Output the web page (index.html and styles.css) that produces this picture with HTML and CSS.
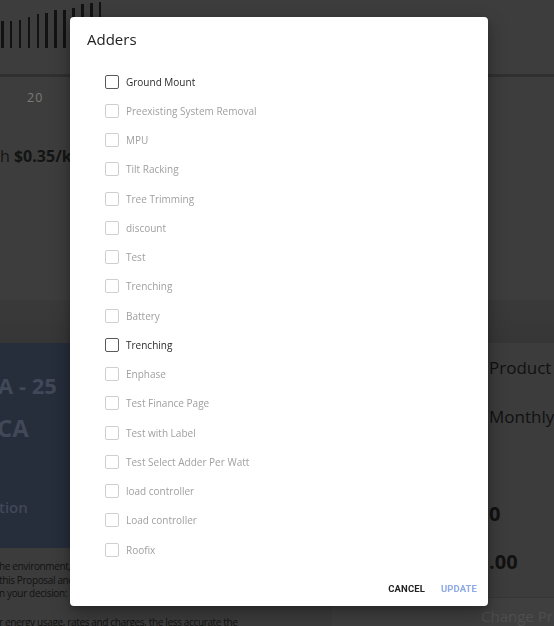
FILE: index.html
```html
<!DOCTYPE html>
<html lang="en">
<head>
<meta charset="utf-8">
<title>Adders</title>
<link rel="stylesheet" href="styles.css">
</head>
<body>
<div class="page">
  <section class="chart">
    <div class="bars">
      <span class="bar" style="height:27px"></span>
      <span class="bar" style="height:27px"></span>
      <span class="bar" style="height:28px"></span>
      <span class="bar" style="height:31px"></span>
      <span class="bar" style="height:34px"></span>
      <span class="bar" style="height:35px"></span>
      <span class="bar" style="height:38px"></span>
      <span class="bar" style="height:38px"></span>
      <span class="bar" style="height:40px"></span>
      <span class="bar" style="height:44px"></span>
      <span class="bar" style="height:45px"></span>
      <span class="bar" style="height:46px"></span>
    </div>
    <div class="axis"></div>
    <div class="tick">20</div>
    <div class="rate">h <b>$0.35/kWh</b></div>
  </section>
  <div class="band"></div>
  <section class="lower">
    <div class="left-col">
      <div class="plan">
        <div class="plan-title">A - 25</div>
        <div class="plan-sub">CA</div>
        <div class="plan-link">tion</div>
      </div>
      <div class="disclaimer">
        <p>he environment,<br>this Proposal and<br>n your decision:</p>
        <p>r energy usage, rates and charges, the less accurate the</p>
      </div>
    </div>
    <div class="right-col">
      <div class="stat">Product</div>
      <div class="stat">Monthly</div>
      <div class="amount first">0</div>
      <div class="amount">.00</div>
      <div class="change">Change Price</div>
    </div>
  </section>
</div>

<div class="dialog" role="dialog" aria-labelledby="dlg-title">
  <h2 class="dialog-title" id="dlg-title">Adders</h2>
  <ul class="adder-list">
    <li class="adder active"><span class="box"></span>Ground Mount</li>
    <li class="adder"><span class="box"></span>Preexisting System Removal</li>
    <li class="adder"><span class="box"></span>MPU</li>
    <li class="adder"><span class="box"></span>Tilt Racking</li>
    <li class="adder"><span class="box"></span>Tree Trimming</li>
    <li class="adder"><span class="box"></span>discount</li>
    <li class="adder"><span class="box"></span>Test</li>
    <li class="adder"><span class="box"></span>Trenching</li>
    <li class="adder"><span class="box"></span>Battery</li>
    <li class="adder active"><span class="box"></span>Trenching</li>
    <li class="adder"><span class="box"></span>Enphase</li>
    <li class="adder"><span class="box"></span>Test Finance Page</li>
    <li class="adder"><span class="box"></span>Test with Label</li>
    <li class="adder"><span class="box"></span>Test Select Adder Per Watt</li>
    <li class="adder"><span class="box"></span>load controller</li>
    <li class="adder"><span class="box"></span>Load controller</li>
    <li class="adder"><span class="box"></span>Roofix</li>
  </ul>
  <div class="actions">
    <button class="btn cancel">CANCEL</button>
    <button class="btn update">UPDATE</button>
  </div>
</div>
</body>
</html>
```
FILE: styles.css
```css
* { box-sizing: border-box; }
html, body { margin: 0; padding: 0; }
body {
  width: 554px;
  height: 626px;
  overflow: hidden;
  background: #3c3c3c;
  font-family: "Open Sans", "Noto Sans", sans-serif;
}
.page {
  display: flex;
  flex-direction: column;
  height: 626px;
}
.chart {
  flex: none;
  height: 300px;
  background: #3d3d3d;
}
.bars {
  display: flex;
  align-items: flex-end;
  gap: 6.3px;
  height: 48px;
  padding-left: 1px;
}
.bar {
  width: 2.6px;
  background: #121212;
}
.axis {
  height: 3px;
  margin-top: 26px;
  background: #303030;
}
.tick {
  margin-top: 13px;
  padding-left: 27px;
  font-size: 12.5px;
  color: #7a7a7a;
  letter-spacing: 1px;
  line-height: 16px;
}
.rate {
  margin-top: 40px;
  font-size: 16px;
  line-height: 20px;
  color: #141414;
  white-space: nowrap;
}
.rate b { font-weight: 700; }
.band {
  flex: none;
  height: 43px;
  background: linear-gradient(#3a3a3a, #363636);
}
.lower {
  flex: none;
  height: 283px;
  display: grid;
  grid-template-columns: 340px 1fr;
}
.left-col {
  display: flex;
  flex-direction: column;
}
.plan {
  height: 205px;
  background: #262d3b;
  padding-top: 28px;
  color: #414857;
  font-weight: 700;
}
.plan-title { font-size: 22px; line-height: 28px; margin-left: -2px; }
.plan-sub { font-size: 24px; line-height: 30px; margin-top: 14px; margin-left: -3px; }
.plan-link { font-size: 15px; font-weight: 600; line-height: 20px; margin-top: 54px; margin-left: -1px; }
.disclaimer {
  padding-top: 12px;
  font-size: 10px;
  letter-spacing: -0.35px;
  line-height: 13.5px;
  color: #121212;
  margin-left: -1px;
  white-space: nowrap;
}
.disclaimer p { margin: 0 0 15px; }
.right-col {
  background: #3c3c3c;
  padding-top: 12px;
  padding-left: 149px;
  display: flex;
  flex-direction: column;
  white-space: nowrap;
  color: #111;
}
.stat { font-size: 17px; line-height: 26px; margin-bottom: 23px; }
.amount { font-size: 20px; font-weight: 700; line-height: 26px; }
.amount.first { margin-top: 48px; }
.amount + .amount { margin-top: 22px; }
.change {
  margin: 22px 0 0 -157px;
  padding: 8px 0 0 149px;
  border-top: 1px solid #363636;
  background: #3f3f3f;
  flex: 1;
  font-size: 15px;
  color: #4e4e4e;
  line-height: 20px;
}

/* dialog */
.dialog {
  position: fixed;
  left: 70px;
  top: 17px;
  width: 418px;
  height: 589px;
  background: #fff;
  border-radius: 4px;
  box-shadow: 0 8px 20px rgba(0,0,0,0.3), 0 2px 6px rgba(0,0,0,0.2);
  display: flex;
  flex-direction: column;
}
.dialog-title {
  margin: 0;
  padding: 12px 17px 0;
  font-size: 15px;
  font-weight: 400;
  line-height: 20px;
  color: #222;
}
.adder-list {
  list-style: none;
  margin: 0;
  padding: 18px 0 0 35px;
}
.adder {
  display: flex;
  align-items: center;
  height: 29.25px;
  font-size: 10px;
  color: #a0a0a0;
}
.box {
  width: 14px;
  height: 14px;
  border: 1.5px solid #cfcfcf;
  border-radius: 2px;
  margin-right: 7px;
  flex: none;
}
.adder.active { color: #2b2b2b; }
.adder.active .box { border-color: #5a5a5a; }
.actions {
  margin-top: auto;
  display: flex;
  justify-content: flex-end;
  gap: 16px;
  padding: 0 11px 11px 0;
}
.btn {
  border: 0;
  background: none;
  padding: 0;
  font-family: Roboto, "Liberation Sans", sans-serif;
  font-weight: 700;
  font-size: 9.5px;
  line-height: 12px;
  letter-spacing: 0.1px;
}
.cancel { color: #222; }
.update { color: #8fabe6; }
```
